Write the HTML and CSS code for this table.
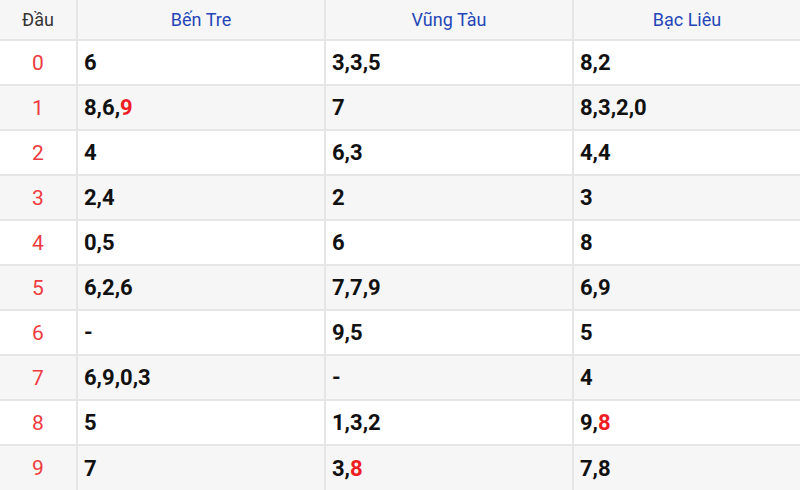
FILE: index.html
```html
<!DOCTYPE html>
<html lang="vi">
<head>
<meta charset="utf-8">
<link rel="stylesheet" href="styles.css">
</head>
<body>
<table class="loto">
  <colgroup>
    <col class="c-head">
    <col class="c-prov">
    <col class="c-prov">
    <col class="c-last">
  </colgroup>
  <thead>
    <tr>
      <th class="dau">Đầu</th>
      <th class="prov">Bến Tre</th>
      <th class="prov">Vũng Tàu</th>
      <th class="prov">Bạc Liêu</th>
    </tr>
  </thead>
  <tbody>
    <tr><td class="idx">0</td><td>6</td><td>3,3,5</td><td>8,2</td></tr>
    <tr><td class="idx">1</td><td>8,6,<span class="hl">9</span></td><td>7</td><td>8,3,2,0</td></tr>
    <tr><td class="idx">2</td><td>4</td><td>6,3</td><td>4,4</td></tr>
    <tr><td class="idx">3</td><td>2,4</td><td>2</td><td>3</td></tr>
    <tr><td class="idx">4</td><td>0,5</td><td>6</td><td>8</td></tr>
    <tr><td class="idx">5</td><td>6,2,6</td><td>7,7,9</td><td>6,9</td></tr>
    <tr><td class="idx">6</td><td>-</td><td>9,5</td><td>5</td></tr>
    <tr><td class="idx">7</td><td>6,9,0,3</td><td>-</td><td>4</td></tr>
    <tr><td class="idx">8</td><td>5</td><td>1,3,2</td><td>9,<span class="hl">8</span></td></tr>
    <tr><td class="idx">9</td><td>7</td><td>3,<span class="hl">8</span></td><td>7,8</td></tr>
  </tbody>
</table>
</body>
</html>
```
FILE: styles.css
```css
html, body {
  margin: 0;
  padding: 0;
  background: #ffffff;
}
body {
  font-family: Roboto, "Liberation Sans", Arial, sans-serif;
  overflow: hidden;
}
.loto {
  width: 800px;
  border-collapse: collapse;
  table-layout: fixed;
}
.c-head { width: 77px; }
.c-prov { width: 248px; }
.c-last { width: 227px; }
.loto th,
.loto td {
  border: 2px solid #e6e6e6;
  padding: 0 0 0 6px;
  box-sizing: border-box;
}
.loto tr > :first-child { border-left: none; }
.loto tr > :last-child { border-right: none; }
.loto thead th { border-top: none; }
.loto tbody tr:last-child td { border-bottom: none; }
.loto thead tr {
  height: 40px;
  background: #f6f6f6;
}
.loto th {
  font-size: 18px;
  font-weight: 400;
  text-align: center;
  padding: 0;
}
.loto th.dau { color: #333333; }
.loto th.prov { color: #2446b8; }
.loto tbody tr {
  height: 45px;
}
.loto tbody tr:nth-child(even) { background: #f6f6f6; }
.loto td {
  font-size: 22px;
  font-weight: 700;
  color: #111111;
  text-align: left;
}
.loto td.idx {
  text-align: center;
  font-size: 21px;
  font-weight: 400;
  color: #ee3b40;
  padding: 0;
}
.hl { color: #ee1c25; }
```
